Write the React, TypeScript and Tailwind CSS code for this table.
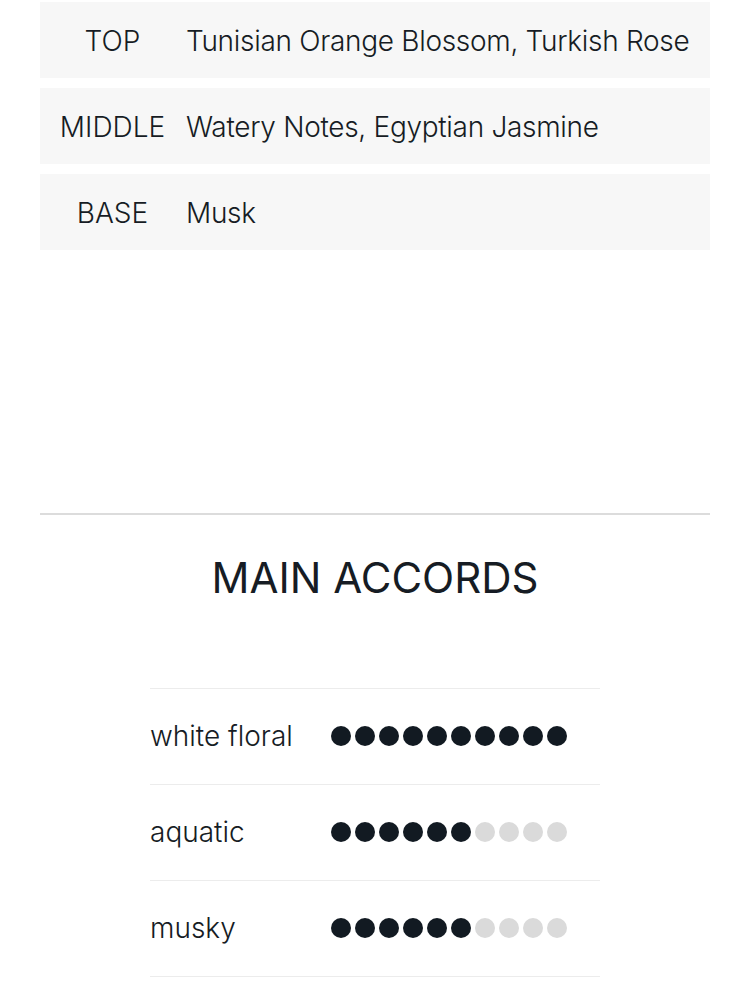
const notes = [
    { label: "TOP", value: "Tunisian Orange Blossom, Turkish Rose" },
    { label: "MIDDLE", value: "Watery Notes, Egyptian Jasmine" },
    { label: "BASE", value: "Musk" },
];

const accords = [
    { name: "white floral", level: 10 },
    { name: "aquatic", level: 6 },
    { name: "musky", level: 6 },
];

const Dots: React.FC<{ level: number }> = ({ level }) => (
    <div className="flex gap-[4px]">
        {Array.from({ length: 10 }).map((_, i) => (
            <span
                key={i}
                className={
                    i < level
                        ? "block w-[20px] h-[20px] rounded-full bg-[#121a22]"
                        : "block w-[20px] h-[20px] rounded-full bg-[#dadada]"
                }
            />
        ))}
    </div>
);

const App: React.FC = () => {
    return (
        <div
            className="bg-white w-[750px] min-h-[1000px] px-[40px] text-[#161c24]"
            style={{ fontFamily: "Inter, 'Noto Sans', sans-serif" }}
        >
            {/* notes pyramid */}
            <div className="pt-[2px] flex flex-col gap-[10px]">
                {notes.map((n) => (
                    <div
                        key={n.label}
                        className="flex items-center h-[76px] bg-[#f7f7f7] pt-[1px]"
                    >
                        <div className="w-[145px] shrink-0 text-center text-[28px] font-light">
                            {n.label}
                        </div>
                        <div className="pl-px text-[28px] font-light tracking-[-0.3px] whitespace-nowrap">
                            {n.value}
                        </div>
                    </div>
                ))}
            </div>

            <hr className="mt-[263px] border-0 h-[2px] bg-[#dcdcdc]" />

            {/* accords */}
            <h2 className="mt-[36px] text-center text-[42px] leading-[54px] font-normal">
                MAIN ACCORDS
            </h2>

            <div className="mt-[83px] mx-auto w-[450px] border-t border-[#ececec]">
                {accords.map((a) => (
                    <div
                        key={a.name}
                        className="flex items-center h-[96px] border-b border-[#ececec] pb-[2px]"
                    >
                        <div className="w-[181px] shrink-0 text-[28px] font-light">
                            {a.name}
                        </div>
                        <Dots level={a.level} />
                    </div>
                ))}
            </div>
        </div>
    );
};

export default App;
